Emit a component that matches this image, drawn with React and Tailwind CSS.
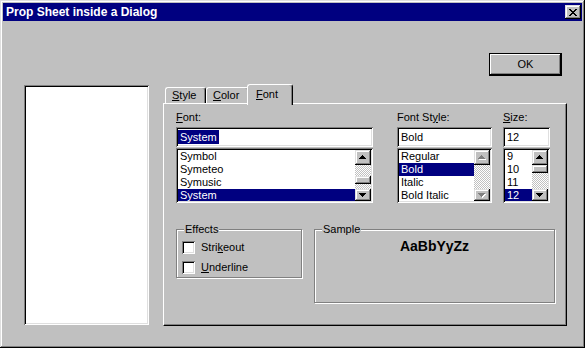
const raised =
  "shadow-[inset_-1px_-1px_0_#000,inset_1px_1px_0_#dfdfdf,inset_-2px_-2px_0_#808080,inset_2px_2px_0_#fff]";
const sunken =
  "shadow-[inset_1px_1px_0_#808080,inset_-1px_-1px_0_#fff,inset_2px_2px_0_#000,inset_-2px_-2px_0_#dfdfdf]";
const dither =
  "bg-[image:repeating-conic-gradient(#c0c0c0_0%_25%,#fff_0%_50%)] bg-[length:2px_2px] bg-size-[2px_2px]";

function Arrow({ dir, disabled }) {
  const rows = [1, 3, 5, 7];
  const order = dir === "up" ? rows : [...rows].reverse();
  const fill = disabled ? "#808080" : "#000";
  return (
    <svg width="8" height="5" shapeRendering="crispEdges">
      {disabled &&
        order.map((w, i) => (
          <rect key={"s" + i} x={(7 - w) / 2 + 1} y={i + 1} width={w} height="1" fill="#fff" />
        ))}
      {order.map((w, i) => (
        <rect key={i} x={(7 - w) / 2} y={i} width={w} height="1" fill={fill} />
      ))}
    </svg>
  );
}

function ArrowBtn({ dir, h, disabled }) {
  return (
    <div className={`${h} bg-[#c0c0c0] ${raised} flex items-center justify-center`}>
      <Arrow dir={dir} disabled={disabled} />
    </div>
  );
}

function Thumb() {
  return <div className={`h-[8px] bg-[#c0c0c0] ${raised}`} />;
}

function Row({ children, sel }) {
  return (
    <div
      className={`h-[13px] leading-[13px] pl-[2px] whitespace-nowrap ${
        sel ? "bg-[#000080] text-white" : ""
      }`}
    >
      {children}
    </div>
  );
}

function Input({ children }) {
  return (
    <div className={`h-[20px] bg-white ${sunken} flex items-center pl-[2px]`}>{children}</div>
  );
}

function Check({ children }) {
  return (
    <div className="flex items-center h-[13px]">
      <div className={`w-[13px] h-[13px] bg-white ${sunken}`} />
      <span className="ml-[6px] leading-[13px]">{children}</span>
    </div>
  );
}

export default function App() {
  return (
    <div className="w-[585px] h-[348px] bg-[#c0c0c0] p-[3px] flex flex-col overflow-hidden font-['Liberation_Sans',Arial,sans-serif] text-[11px] leading-[13px] text-black shadow-[inset_-1px_-1px_0_#000,inset_1px_1px_0_#dfdfdf,inset_-2px_-2px_0_#808080,inset_2px_2px_0_#fff]">
      {/* Title bar */}
      <div className="h-[18px] shrink-0 bg-[#000080] flex items-center justify-between pl-[3px] pr-[1px]">
        <span className="text-white font-bold text-[12px] leading-[14px]">
          Prop Sheet inside a Dialog
        </span>
        <div className={`w-[16px] h-[14px] bg-[#c0c0c0] ${raised} flex items-center justify-center`}>
          <svg width="8" height="7" shapeRendering="crispEdges">
            <rect x="0" y="0" width="2" height="1" fill="#000" />
            <rect x="6" y="0" width="2" height="1" fill="#000" />
            <rect x="1" y="1" width="2" height="1" fill="#000" />
            <rect x="5" y="1" width="2" height="1" fill="#000" />
            <rect x="2" y="2" width="4" height="1" fill="#000" />
            <rect x="3" y="3" width="2" height="1" fill="#000" />
            <rect x="2" y="4" width="4" height="1" fill="#000" />
            <rect x="1" y="5" width="2" height="1" fill="#000" />
            <rect x="5" y="5" width="2" height="1" fill="#000" />
            <rect x="0" y="6" width="2" height="1" fill="#000" />
            <rect x="6" y="6" width="2" height="1" fill="#000" />
          </svg>
        </div>
      </div>

      {/* Body */}
      <div className="flex-1 flex pl-[21px]">
        <div className={`mt-[64px] w-[125px] h-[240px] bg-white ${sunken}`} />

        <div className="ml-[14px] w-[404px] pt-[32px] flex flex-col">
          <div className="flex justify-end pr-[5px] mb-[8px]">
            <div className="w-[73px] h-[23px] bg-[#c0c0c0] border border-black shadow-[inset_-1px_-1px_0_#000,inset_1px_1px_0_#fff,inset_-2px_-2px_0_#808080] flex items-center justify-center">
              OK
            </div>
          </div>

          {/* Tabs */}
          <div className="h-[19px] flex items-end pl-[2px] relative z-10">
            <div className="w-[41px] h-[16px] bg-[#c0c0c0] border-l border-t border-r border-l-white border-t-white border-r-black rounded-t-[3px] shadow-[inset_-1px_0_0_#808080] flex items-center pl-[6px]">
              <span>
                <span className="underline">S</span>tyle
              </span>
            </div>
            <div className="w-[43px] h-[16px] bg-[#c0c0c0] border-l border-t border-r border-l-white border-t-white border-r-black rounded-t-[3px] shadow-[inset_-1px_0_0_#808080] flex items-center pl-[6px]">
              <span>
                <span className="underline">C</span>olor
              </span>
            </div>
            <div className="relative z-10 -ml-[2px] w-[46px] h-[21px] -mb-[2px] bg-[#c0c0c0] border-l border-t border-r border-l-white border-t-white border-r-black rounded-t-[3px] shadow-[inset_-1px_0_0_#808080] flex items-start pt-[3px] pl-[8px]">
              <span>
                <span className="underline">F</span>ont
              </span>
            </div>
          </div>

          {/* Panel */}
          <div className="h-[223px] bg-[#c0c0c0] border border-t-white border-l-white border-r-black border-b-black shadow-[inset_-1px_-1px_0_#808080] pt-[7px] pl-[12px]">
            <div className="flex">
              {/* Font */}
              <div className="w-[197px] mr-[24px] flex flex-col">
                <div className="h-[16px]">
                  <span className="underline">F</span>ont:
                </div>
                <Input>
                  <span className="h-[14px] leading-[14px] px-[2px] bg-[#000080] text-white">
                    System
                  </span>
                </Input>
                <div className={`mt-[1px] h-[55px] bg-white ${sunken} p-[2px] flex`}>
                  <div className="flex-1 overflow-hidden">
                    <Row>Symbol</Row>
                    <Row>Symeteo</Row>
                    <Row>Symusic</Row>
                    <Row sel>System</Row>
                  </div>
                  <div className="w-[16px] flex flex-col">
                    <ArrowBtn dir="up" h="h-[15px]" />
                    <div className={`h-[11px] ${dither}`} />
                    <Thumb />
                    <div className={`h-[5px] ${dither}`} />
                    <ArrowBtn dir="down" h="h-[12px]" />
                  </div>
                </div>
              </div>

              {/* Font Style */}
              <div className="w-[95px] mr-[11px] flex flex-col">
                <div className="h-[16px]">
                  Font St<span className="underline">y</span>le:
                </div>
                <Input>
                  <span className="px-[2px]">Bold</span>
                </Input>
                <div className={`mt-[1px] h-[55px] bg-white ${sunken} p-[2px] flex`}>
                  <div className="flex-1 overflow-hidden">
                    <Row>Regular</Row>
                    <Row sel>Bold</Row>
                    <Row>Italic</Row>
                    <Row>Bold Italic</Row>
                  </div>
                  <div className="w-[16px] flex flex-col">
                    <ArrowBtn dir="up" h="h-[15px]" disabled />
                    <div className={`h-[24px] ${dither}`} />
                    <ArrowBtn dir="down" h="h-[12px]" disabled />
                  </div>
                </div>
              </div>

              {/* Size */}
              <div className="w-[47px] flex flex-col">
                <div className="h-[16px]">
                  <span className="underline">S</span>ize:
                </div>
                <Input>
                  <span className="px-[2px]">12</span>
                </Input>
                <div className={`mt-[1px] h-[55px] bg-white ${sunken} p-[2px] flex`}>
                  <div className="flex-1 overflow-hidden">
                    <Row>9</Row>
                    <Row>10</Row>
                    <Row>11</Row>
                    <Row sel>12</Row>
                  </div>
                  <div className="w-[16px] flex flex-col">
                    <ArrowBtn dir="up" h="h-[15px]" />
                    <Thumb />
                    <div className={`h-[16px] ${dither}`} />
                    <ArrowBtn dir="down" h="h-[12px]" />
                  </div>
                </div>
              </div>
            </div>

            {/* Group boxes */}
            <div className="flex mt-[26px]">
              <div className="relative w-[126px] h-[49px] border border-[#808080] shadow-[inset_1px_1px_0_#fff,1px_1px_0_#fff] pt-[11px] pl-[5px] flex flex-col gap-[7px]">
                <span className="absolute top-[-7px] left-[7px] px-[1px] bg-[#c0c0c0] leading-[13px]">
                  Effects
                </span>
                <Check>
                  Stri<span className="underline">k</span>eout
                </Check>
                <Check>
                  <span className="underline">U</span>nderline
                </Check>
              </div>
              <div className="relative ml-[12px] w-[241px] h-[74px] border border-[#808080] shadow-[inset_1px_1px_0_#fff,1px_1px_0_#fff] pt-[8px] flex justify-center">
                <span className="absolute top-[-7px] left-[7px] px-[1px] bg-[#c0c0c0] leading-[13px]">
                  Sample
                </span>
                <span className="text-[14px] leading-[16px] font-bold h-[16px]">AaBbYyZz</span>
              </div>
            </div>
          </div>
        </div>
      </div>
    </div>
  );
}
